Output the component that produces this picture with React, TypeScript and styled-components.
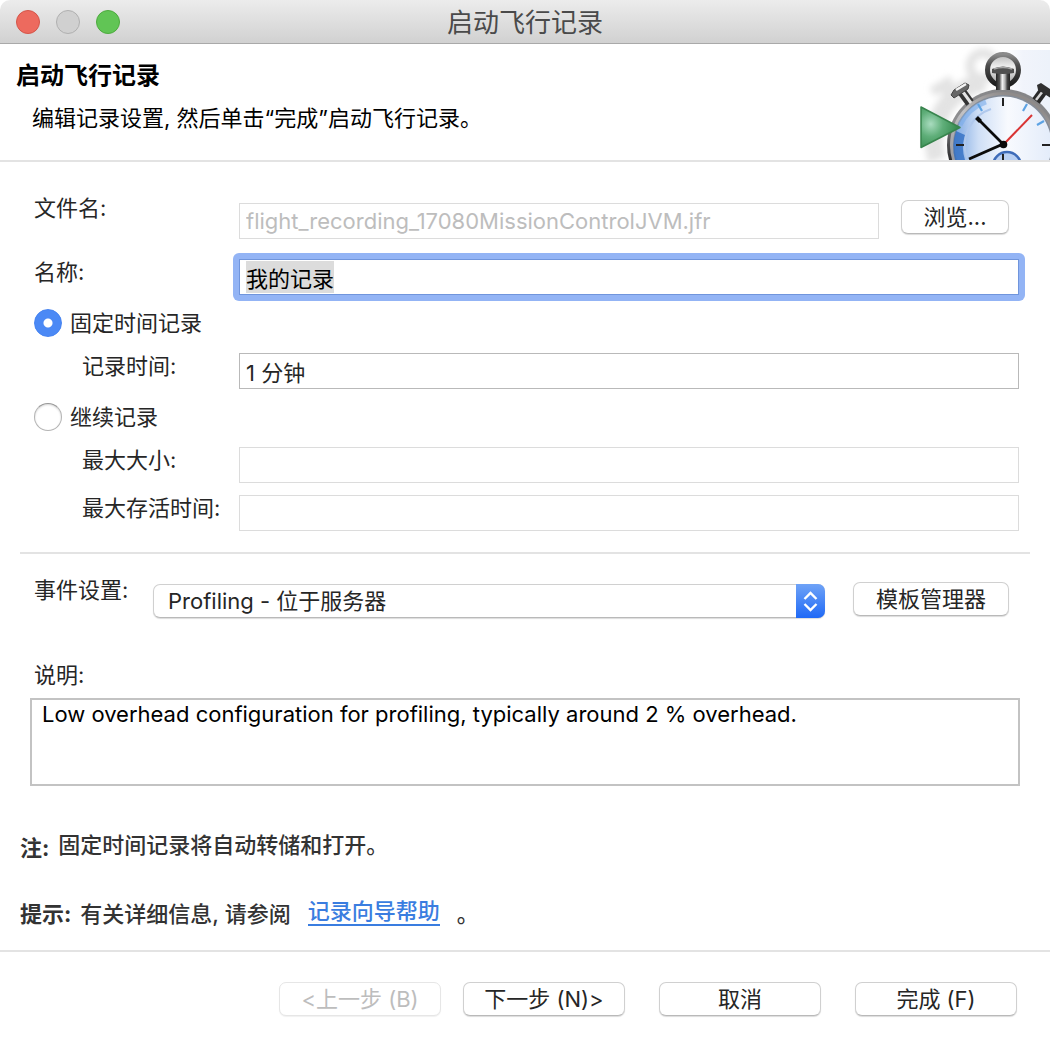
import React, { useEffect, useRef, useState } from "react";
import styled, { createGlobalStyle } from "styled-components";

const GlobalStyle = createGlobalStyle`
  *, *::before, *::after { box-sizing: border-box; }
  body {
    margin: 0;
    background: #fff;
    color: #262626;
    font-family: Inter, "Noto Sans CJK SC", sans-serif;
    font-size: 22px;
    line-height: 28px;
  }
  button, input, select, textarea { font: inherit; color: inherit; }
`;

const Dialog = styled.main`
  display: flex;
  flex-direction: column;
  min-height: 100vh;
  background: #fff;
`;

const TitleBar = styled.header`
  display: grid;
  grid-template-columns: 1fr auto 1fr;
  align-items: center;
  height: 44px;
  padding: 0 16px;
  border-bottom: 1px solid #a9a9a9;
  border-radius: 10px 10px 0 0;
  background: linear-gradient(#ececec, #d1d1d1);
`;

const WindowControls = styled.div`
  display: flex;
  gap: 16px;
`;

const WindowButton = styled.button<{ $fill: string; $edge: string }>`
  width: 24px;
  height: 24px;
  padding: 0;
  border: 1px solid ${(p) => p.$edge};
  border-radius: 50%;
  background: ${(p) => p.$fill};
`;

const WindowTitle = styled.span`
  padding-top: 2px;
  font-size: 26px;
  color: #4a4a4a;
`;

const Banner = styled.section`
  display: flex;
  justify-content: space-between;
  height: 118px;
  border-bottom: 2px solid #e3e3e3;
  color: #000;
`;

const BannerText = styled.div`
  padding: 18px 0 0 16px;
`;

const Heading = styled.h1`
  margin: 0;
  font-size: 24px;
  line-height: 28px;
  font-weight: 700;
`;

const Subheading = styled.p`
  margin: 14px 0 0 16px;
`;

const Content = styled.form`
  flex: 1;
  display: flex;
  flex-direction: column;
`;

const Page = styled.div`
  flex: 1;
  padding: 33px 20px 0;
`;

const Section = styled.div`
  padding: 0 11px 0 14px;
`;

const Row = styled.div<{ $gap?: number; $label?: number }>`
  display: grid;
  grid-template-columns: ${(p) => p.$label ?? 205}px minmax(0, 1fr);
  align-items: start;
  margin-bottom: ${(p) => p.$gap ?? 12}px;
`;

const Label = styled.label<{ $nested?: boolean }>`
  padding-left: ${(p) => (p.$nested ? 48 : 0)}px;
  line-height: 26px;
  white-space: nowrap;
`;

const WithButton = styled.div<{ $gap: number }>`
  display: flex;
  align-items: flex-start;
  gap: ${(p) => p.$gap}px;
  padding: 5px 10px 0 0;
`;

const TextField = styled.input`
  display: block;
  flex: 1;
  width: 100%;
  min-width: 0;
  height: 36px;
  padding: 0 6px;
  border: 1px solid #b9b9b9;
  border-radius: 0;
  outline: none;
  background: #fff;

  &:disabled {
    border-color: #dcdcdc;
    color: #bdbdbd;
  }
  &:focus {
    border-color: #7095dc;
    box-shadow: 0 0 0 6px #93b4f5;
    clip-path: inset(-6px round 6px);
    color: #000;
  }
  &::selection {
    background: rgba(220, 220, 220, 0.99);
    color: #000;
  }
`;

const FileField = styled(TextField)`
  margin-top: 3px;
`;

const Button = styled.button<{ $width: number }>`
  flex: none;
  width: ${(p) => p.$width}px;
  height: 34px;
  padding: 0;
  border: 1px solid #d0d0d0;
  border-bottom-color: #b9b9b9;
  border-radius: 7px;
  background: #fff;
  box-shadow: 0 1px 1px rgba(0, 0, 0, 0.14);
  white-space: nowrap;

  &:disabled {
    border-color: #e6e6e6;
    color: #bdbdbd;
    box-shadow: 0 1px 1px rgba(0, 0, 0, 0.06);
  }
`;

const RadioRow = styled.label`
  display: flex;
  align-items: center;
  gap: 8px;
  width: max-content;
  height: 28px;
  margin-bottom: 16px;
`;

const Radio = styled.input`
  appearance: none;
  width: 28px;
  height: 28px;
  margin: 0;
  border: 1px solid #b4b4b4;
  border-top-color: #979797;
  border-radius: 50%;
  background: #fff;
  box-shadow: inset 0 1px 2px rgba(0, 0, 0, 0.16);

  &:checked {
    border-color: #4583f1;
    background: radial-gradient(circle, #fff 0 4px, #4b89f5 5px);
    box-shadow: none;
  }
`;

const Divider = styled.hr`
  height: 2px;
  margin: 21px 0 23px;
  border: 0;
  background: #e3e3e3;
`;

const SelectBox = styled.div`
  position: relative;
  flex: 1;
  min-width: 0;
  margin-top: 2px;
`;

const Select = styled.select`
  appearance: none;
  display: block;
  width: 100%;
  height: 34px;
  padding: 0 40px 0 14px;
  border: 1px solid #d0d0d0;
  border-bottom-color: #b9b9b9;
  border-radius: 7px;
  background: #fff;
  box-shadow: 0 1px 1px rgba(0, 0, 0, 0.14);
`;

const SelectArrows = styled.span`
  position: absolute;
  top: 0;
  right: 0;
  display: flex;
  align-items: center;
  justify-content: center;
  width: 29px;
  height: 34px;
  border-radius: 0 7px 7px 0;
  background: linear-gradient(#6fa3f7, #1f69f6);
  pointer-events: none;
`;

const DescriptionLabel = styled(Label)`
  display: block;
  margin: 44px 0 10px;
`;

const DescriptionBox = styled.div`
  padding: 0 10px;
`;

const Description = styled.textarea`
  display: block;
  width: 100%;
  height: 88px;
  padding: 0 10px;
  border: 2px solid #c3c3c3;
  border-radius: 0;
  outline: none;
  resize: none;
  color: #000;
`;

const Note = styled.p`
  display: flex;
  align-items: flex-end;
  gap: 9px;
  margin: 0;
  padding-top: 45px;
  color: #333;
  font-weight: 500;

  & + & {
    padding-top: 35px;
  }
`;

const NoteLabel = styled.strong`
  font-weight: 700;
`;

const Raised = styled.span`
  padding-bottom: 3px;
`;

const HelpLink = styled.a`
  margin: 0 8px;
  border-bottom: 2px solid #3a7de0;
  color: #3a7de0;
  text-decoration: none;
`;

const Footer = styled.footer`
  display: flex;
  justify-content: flex-end;
  gap: 34px;
  padding: 30px 33px 36px 20px;
  border-top: 2px solid #e3e3e3;
`;

const Steps = styled.div`
  display: flex;
  gap: 22px;
`;

const Picture = styled.svg`
  flex: none;
  display: block;
`;

function Stopwatch() {
  return (
    <Picture width="135" height="116" viewBox="915 44 135 116" aria-hidden="true">
      <defs>
        <linearGradient id="face" x1="0" y1="0" x2="1" y2="0">
          <stop offset="0" stopColor="#7fa9e2" />
          <stop offset="0.25" stopColor="#cfdff6" />
          <stop offset="0.55" stopColor="#f8fafe" />
          <stop offset="1" stopColor="#e3ecfa" />
        </linearGradient>
        <linearGradient id="rim" x1="0" y1="1" x2="0.5" y2="0">
          <stop offset="0.3" stopColor="#2a2a2c" />
          <stop offset="0.6" stopColor="#8e8e90" />
          <stop offset="1" stopColor="#868688" />
        </linearGradient>
        <linearGradient id="rimInside" x1="0" y1="1" x2="0.5" y2="0">
          <stop offset="0.3" stopColor="#9a9aa0" />
          <stop offset="0.7" stopColor="#c2c2c4" />
          <stop offset="1" stopColor="#8f8b8a" />
        </linearGradient>
        <linearGradient id="steel" x1="0" y1="0" x2="1" y2="0">
          <stop offset="0" stopColor="#232323" />
          <stop offset="0.25" stopColor="#555" />
          <stop offset="0.45" stopColor="#f4f4f4" />
          <stop offset="0.65" stopColor="#b0b0b0" />
          <stop offset="0.8" stopColor="#444" />
          <stop offset="1" stopColor="#232323" />
        </linearGradient>
        <linearGradient id="crown" x1="0" y1="0" x2="0" y2="1">
          <stop offset="0" stopColor="#8b8b8b" />
          <stop offset="0.35" stopColor="#4d4d4d" />
          <stop offset="1" stopColor="#1c1c1c" />
        </linearGradient>
        <linearGradient id="crownInside" x1="0" y1="0" x2="0" y2="1">
          <stop offset="0" stopColor="#b9b9b9" />
          <stop offset="0.4" stopColor="#f0f0f0" />
          <stop offset="1" stopColor="#9b9b9b" />
        </linearGradient>
        <radialGradient id="play" cx="0.25" cy="0.42" r="0.7">
          <stop offset="0" stopColor="#a9dcbf" />
          <stop offset="0.45" stopColor="#5fae79" />
          <stop offset="1" stopColor="#358a4e" />
        </radialGradient>
        <linearGradient id="sky" x1="0" y1="0" x2="1" y2="0">
          <stop offset="0" stopColor="#f1f4fb" stopOpacity="0" />
          <stop offset="0.4" stopColor="#f1f4fb" />
          <stop offset="1" stopColor="#edf2fa" />
        </linearGradient>
        <filter id="soft" x="-30%" y="-30%" width="160%" height="160%">
          <feGaussianBlur stdDeviation="3" />
        </filter>
      </defs>
      <rect x="1005" y="50" width="45" height="110" fill="url(#sky)" />
      <g filter="url(#soft)" fill="none" stroke="#e3e3e3">
        <circle cx="983" cy="66" r="13" strokeWidth="9" />
        <path d="M932 92l20-12M943 86l12 16" strokeWidth="10" />
        <path d="M985 82a60 60 0 0 0-48 78" strokeWidth="18" />
      </g>
      <circle cx="1003" cy="145" r="56" fill="url(#rim)" />
      <circle cx="1003" cy="145" r="53" fill="url(#rimInside)" />
      <circle cx="1003" cy="145" r="50" fill="#858d99" />
      <circle cx="1003" cy="145" r="48.500" fill="url(#face)" />
      <path d="M955 160a50 50 0 0 1 1-29l9 4a40 40 0 0 0 0 25z" fill="#2b69c0" opacity="0.75" />
      <path d="M960 125a46 46 0 0 1 26-23" fill="none" stroke="#79abea" strokeWidth="5" opacity="0.6" />
      <path d="M967 158a38 38 0 0 1 24-49" fill="none" stroke="#b0c8ec" strokeWidth="2" />
      <circle cx="1003" cy="70" r="15.500" fill="url(#crownInside)" stroke="url(#crown)" strokeWidth="5" />
      <rect x="996" y="71" width="14" height="19" fill="url(#steel)" />
      <path d="M992 69q11-5 22 0v4q-11 2-22 0z" fill="#505050" />
      <path d="M994 69q9-3 18 0" fill="none" stroke="#a8a8a8" strokeWidth="1.500" />
      <path d="M962 92l8 11" stroke="#333" strokeWidth="9" />
      <path d="M963 92l8 11" stroke="#e3e3e3" strokeWidth="3" />
      <path d="M951 95l3-5 11-7 4 2-1 4-14 9z" fill="#666" stroke="#444" strokeWidth="1" />
      <path d="M956 90l10-6" stroke="#f4f4f4" strokeWidth="2.500" />
      <path d="M1044 90l-8 11" stroke="#292929" strokeWidth="9" />
      <path d="M1043 91l-7 9" stroke="#d7d7d7" strokeWidth="2.500" />
      <path d="M1037 85l4-2 12 8-2 7-13-8z" fill="#303030" />
      <g stroke="#222" strokeWidth="2">
        <path d="M1003 98v8M956 145h8M1042 145h8" />
      </g>
      <g stroke="#5da3e4" strokeWidth="2.200">
        <path d="M978 104l4 7M1027 104l-4 7M1044 121l-7 4" />
      </g>
      <circle cx="1007" cy="166" r="14" fill="#b9d0f3" stroke="#3e6cb9" strokeWidth="2.500" />
      <path d="M1003 154v6" stroke="#222" strokeWidth="2" />
      <path d="M1004 144l28-29" stroke="#d93434" strokeWidth="2" />
      <path d="M978 119l25 25-34 15" fill="none" stroke="#0b0b0b" strokeWidth="2.800" />
      <path d="M976.500 117.500l4 4" stroke="#0b0b0b" strokeWidth="4" />
      <circle cx="1003.500" cy="144.500" r="3.800" fill="#0b0b0b" />
      <path d="M921 107l39 20.500-39 20z" fill="url(#play)" stroke="#38844d" strokeWidth="1.500" strokeLinejoin="round" />
    </Picture>
  );
}

export default function App() {
  const nameField = useRef<HTMLInputElement>(null);
  const [mode, setMode] = useState("fixed");

  useEffect(() => {
    nameField.current?.focus();
    nameField.current?.select();
  }, []);

  return (
    <Dialog lang="zh-CN">
      <GlobalStyle />
      <TitleBar>
        <WindowControls>
          <WindowButton type="button" aria-label="关闭" $fill="#ed6a5e" $edge="#d55549" />
          <WindowButton type="button" aria-label="最小化" disabled $fill="#d0d0d0" $edge="#b0b0b0" />
          <WindowButton type="button" aria-label="缩放" $fill="#61c555" $edge="#4dab3e" />
        </WindowControls>
        <WindowTitle>启动飞行记录</WindowTitle>
      </TitleBar>

      <Banner>
        <BannerText>
          <Heading>启动飞行记录</Heading>
          <Subheading>编辑记录设置, 然后单击“完成”启动飞行记录。</Subheading>
        </BannerText>
        <Stopwatch />
      </Banner>

      <Content onSubmit={(e) => e.preventDefault()}>
        <Page>
          <Section>
            <Row $gap={20}>
              <Label htmlFor="file">文件名:</Label>
              <WithButton $gap={22}>
                <FileField id="file" disabled defaultValue="flight_recording_17080MissionControlJVM.jfr" />
                <Button type="button" $width={108}>浏览...</Button>
              </WithButton>
            </Row>
            <Row $gap={14}>
              <Label htmlFor="name">名称:</Label>
              <TextField id="name" ref={nameField} defaultValue="我的记录" />
            </Row>
            <RadioRow>
              <Radio type="radio" name="mode" checked={mode === "fixed"} onChange={() => setMode("fixed")} />
              固定时间记录
            </RadioRow>
            <Row $gap={14}>
              <Label htmlFor="duration" $nested>记录时间:</Label>
              <TextField id="duration" disabled={mode !== "fixed"} defaultValue="1 分钟" />
            </Row>
            <RadioRow>
              <Radio type="radio" name="mode" checked={mode === "continuous"} onChange={() => setMode("continuous")} />
              继续记录
            </RadioRow>
            <Row>
              <Label htmlFor="size" $nested>最大大小:</Label>
              <TextField id="size" disabled={mode !== "continuous"} />
            </Row>
            <Row $gap={0}>
              <Label htmlFor="age" $nested>最大存活时间:</Label>
              <TextField id="age" disabled={mode !== "continuous"} />
            </Row>
          </Section>

          <Divider />

          <Section>
            <Row $label={119} $gap={0}>
              <Label htmlFor="events">事件设置:</Label>
              <WithButton $gap={28}>
                <SelectBox>
                  <Select id="events" defaultValue="profiling">
                    <option value="profiling">Profiling - 位于服务器</option>
                  </Select>
                  <SelectArrows>
                    <svg width="15" height="21" viewBox="0 0 15 21" fill="none" stroke="#fff" strokeWidth="2.400" aria-hidden="true">
                      <path d="M1.500 8l6-6 6 6M1.500 13l6 6 6-6" />
                    </svg>
                  </SelectArrows>
                </SelectBox>
                <Button type="button" $width={156}>模板管理器</Button>
              </WithButton>
            </Row>
            <DescriptionLabel htmlFor="description">说明:</DescriptionLabel>
          </Section>
          <DescriptionBox>
            <Description
              id="description"
              readOnly
              value="Low overhead configuration for profiling, typically around 2 % overhead."
            />
          </DescriptionBox>

          <Note>
            <NoteLabel>注:</NoteLabel>
            <Raised>固定时间记录将自动转储和打开。</Raised>
          </Note>
          <Note>
            <NoteLabel>提示:</NoteLabel>
            <span>有关详细信息, 请参阅</span>
            <Raised>
              <HelpLink href="#help">记录向导帮助</HelpLink>
            </Raised>
            <span>。</span>
          </Note>
        </Page>

        <Footer>
          <Steps>
            <Button type="button" disabled $width={162}>&lt;上一步 (B)</Button>
            <Button type="button" $width={162}>下一步 (N)&gt;</Button>
          </Steps>
          <Button type="button" $width={162}>取消</Button>
          <Button type="submit" $width={162}>完成 (F)</Button>
        </Footer>
      </Content>
    </Dialog>
  );
}
